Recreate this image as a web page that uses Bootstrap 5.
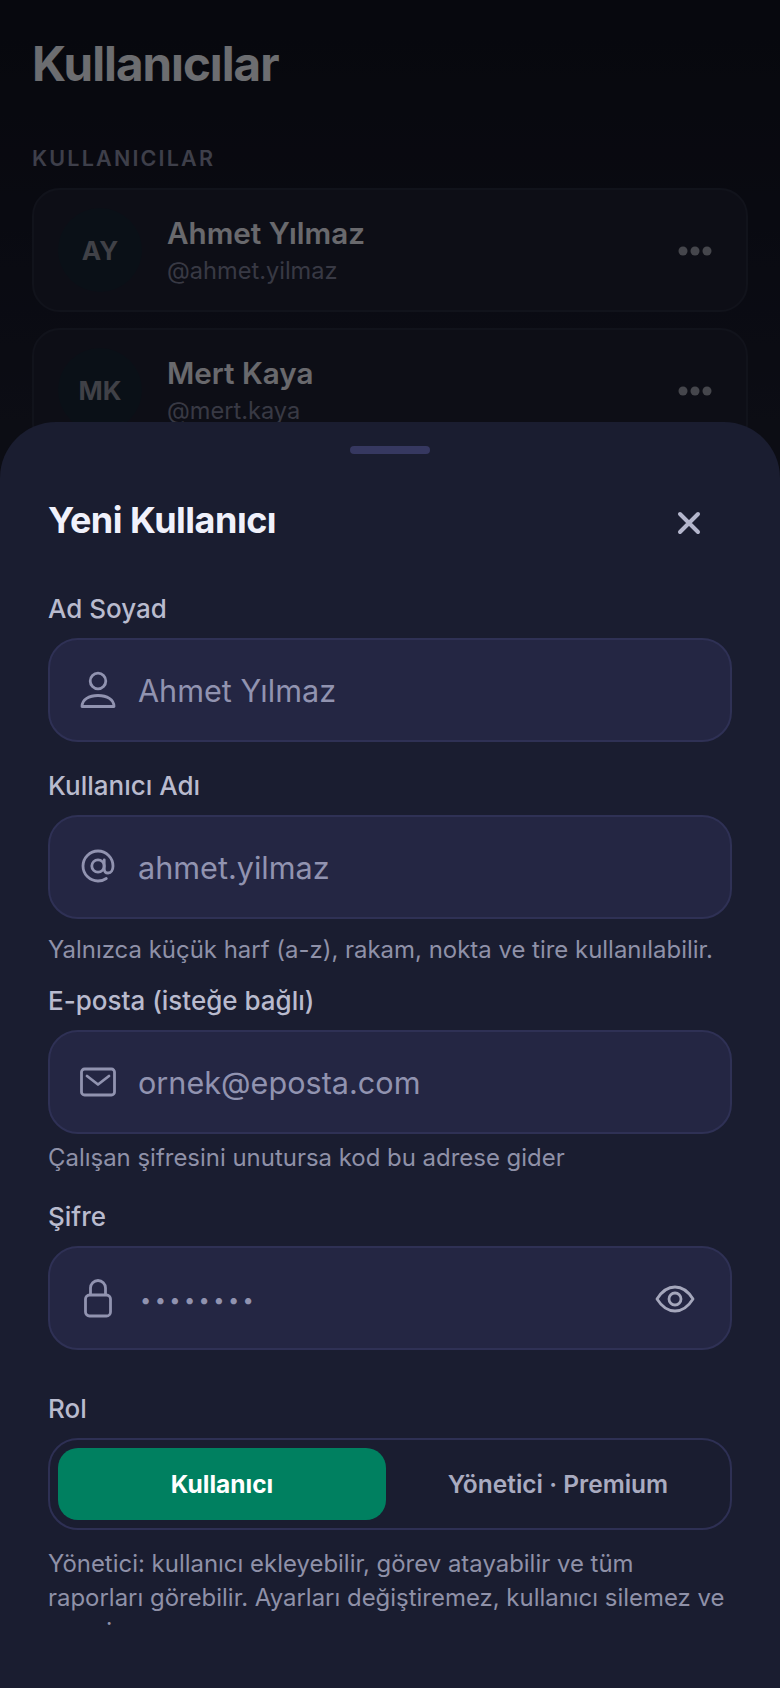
<!DOCTYPE html>
<html lang="tr">
<head>
<meta charset="utf-8">
<title>Kullanıcılar</title>
<link href="https://cdn.jsdelivr.net/npm/bootstrap@5.3.0/dist/css/bootstrap.min.css" rel="stylesheet">
<style>
html,body{height:100%;margin:0}
body{background:linear-gradient(#10121f 0,#1b1d2e 422px);font-family:"Inter","Liberation Sans",sans-serif;overflow:hidden;position:relative;width:780px;height:1688px}
.pg-wrap{padding:37px 32px 0}
.pg-title{font-size:47.500px;font-weight:700;letter-spacing:-1px;line-height:54px;color:#f0f1f8;margin:0 0 55px}
.pg-section{font-size:21.500px;font-weight:600;letter-spacing:2.200px;line-height:24px;color:#8a8ca4;margin:0 0 18px}
.u-card{flex-direction:row;align-items:center;height:124px;margin-bottom:16px;padding:0 24px;background:#1e2031;border:2px solid #272a3d;border-radius:28px}
.u-av{width:84px;height:84px;border-radius:50%;background:#182434;color:#8e909e;font-size:26px;font-weight:700;flex:none}
.u-text{margin-left:25px}
.u-name{font-size:29.600px;font-weight:600;line-height:36px;color:#e8e9f2}
.u-handle{font-size:23.600px;line-height:30px;color:#7d7f97;margin-top:5px}
.u-dots{width:34px;height:10px;flex:none;margin:2px 10px 0 0}
.dimmer{position:absolute;inset:0;background:rgba(0,0,0,.55)}
.sheet{position:absolute;left:0;right:0;top:422px;bottom:0;background:#1a1d30;border-radius:56px 56px 0 0;padding:24px 48px 0}
.sheet-clip{height:1032px;overflow:hidden}
.grab{width:80px;height:8px;border-radius:4px;background:#363860;margin:0 auto}
.sheet-head{height:40px;margin:46px 0 54px}
.sheet-title{font-size:36px;font-weight:700;letter-spacing:-.5px;color:#f0f1fb;margin:0;line-height:40px}
.x-btn{width:64px;height:64px;margin:6px 11px 0 0;border:0;background:none;padding:0}
.fld-label{font-size:26px;font-weight:500;line-height:30px;color:#b9bbce;margin:0 0 14px;display:block}
.fld{height:104px;background:#242643;border:2px solid #2f3155;border-radius:30px;padding:0 32px 0 30px;gap:22px}
.fld .form-control{background:transparent;border:0;box-shadow:none;padding:0;font-size:30.600px;color:#9193b0;height:60px;border-radius:0;font-family:inherit}
.fld .form-control::placeholder{color:#9193b0;opacity:1}
.fld svg{flex:none}
.fld-ico{width:36px;height:40px;flex:none}
.fld .eye{margin:2px 3px 0 0}
.hint{font-size:23.950px;line-height:34px;color:#8f91a8}
.g29{margin-top:29px}.g19{margin-top:19px}.g27{margin-top:27px}.g44{margin-top:44px}
.h14{margin-top:14px}.h7{margin-top:7px}.h17{margin-top:17px}
.seg{height:92px;padding:8px;border:2px solid #2e3054;border-radius:30px}
.seg .btn{flex:1 1 50%;height:72px;border:0;border-radius:20px;font-size:24.500px;font-weight:600;color:#a9abc0;padding:0}
.seg .btn.on{background:#008060;color:#fff;font-weight:700}
.fld .pw{font-size:20px;letter-spacing:3.400px;padding:4px 0 0 2px}
</style>
</head>
<body>
<main class="pg-wrap">
  <h1 class="pg-title">Kullanıcılar</h1>
  <div class="pg-section">KULLANICILAR</div>
  <div class="card u-card d-flex">
    <div class="u-av d-flex align-items-center justify-content-center">AY</div>
    <div class="flex-grow-1 u-text">
      <div class="u-name">Ahmet Yılmaz</div>
      <div class="u-handle">@ahmet.yilmaz</div>
    </div>
    <svg class="u-dots" viewBox="0 0 34 10" fill="#9a9ba8"><circle cx="5" cy="5" r="4.500"/><circle cx="17" cy="5" r="4.500"/><circle cx="29" cy="5" r="4.500"/></svg>
  </div>
  <div class="card u-card d-flex">
    <div class="u-av d-flex align-items-center justify-content-center">MK</div>
    <div class="flex-grow-1 u-text">
      <div class="u-name">Mert Kaya</div>
      <div class="u-handle">@mert.kaya</div>
    </div>
    <svg class="u-dots" viewBox="0 0 34 10" fill="#9a9ba8"><circle cx="5" cy="5" r="4.500"/><circle cx="17" cy="5" r="4.500"/><circle cx="29" cy="5" r="4.500"/></svg>
  </div>
</main>
<div class="dimmer"></div>
<section class="sheet">
  <div class="grab"></div>
  <div class="sheet-head d-flex align-items-center justify-content-between">
    <h2 class="sheet-title">Yeni Kullanıcı</h2>
    <button class="x-btn d-flex align-items-center justify-content-center" type="button" aria-label="Kapat">
      <svg width="26" height="26" viewBox="0 0 26 26" fill="none" stroke="#b4b6cc" stroke-width="4" stroke-linecap="round"><path d="M4 4l18 18M22 4L4 22"/></svg>
    </button>
  </div>
  <div class="sheet-clip">
    <label class="fld-label">Ad Soyad</label>
    <div class="fld d-flex align-items-center">
      <svg class="fld-ico" viewBox="0 0 36 40" fill="none" stroke="#9193b0" stroke-width="2.800" stroke-linejoin="round"><circle cx="18" cy="11" r="7.800"/><path d="M2 36.500c0-7 7-11 16-11s16 4 16 11z"/></svg>
      <input class="form-control" type="text" placeholder="Ahmet Yılmaz">
    </div>
    <label class="fld-label g29">Kullanıcı Adı</label>
    <div class="fld d-flex align-items-center">
      <svg class="fld-ico" viewBox="0 0 36 40" fill="none" stroke="#9193b0" stroke-width="2.800" stroke-linecap="round"><circle cx="18" cy="19" r="6.200"/><path d="M24.200 12.800v8.600c0 3 1.800 4.600 3.900 4.600 3 0 4.900-3 4.900-7 0-8.300-6.700-15-15-15S3 10.700 3 19s6.700 15 15 15c3.200 0 6-.9 8.300-2.500"/></svg>
      <input class="form-control" type="text" placeholder="ahmet.yilmaz">
    </div>
    <div class="hint h14">Yalnızca küçük harf (a-z), rakam, nokta ve tire kullanılabilir.</div>
    <label class="fld-label g19">E-posta (isteğe bağlı)</label>
    <div class="fld d-flex align-items-center">
      <svg class="fld-ico" viewBox="0 0 36 40" fill="none" stroke="#9193b0" stroke-width="2.800" stroke-linecap="round" stroke-linejoin="round"><rect x="1.500" y="7" width="33" height="26" rx="3"/><path d="M7 14l11 8.500L29 14"/></svg>
      <input class="form-control" type="email" placeholder="ornek@eposta.com">
    </div>
    <div class="hint h7">Çalışan şifresini unutursa kod bu adrese gider</div>
    <label class="fld-label g27">Şifre</label>
    <div class="fld d-flex align-items-center">
      <svg class="fld-ico" viewBox="0 0 36 40" fill="none" stroke="#9193b0" stroke-width="2.800" stroke-linejoin="round"><rect x="5.500" y="17" width="25" height="21" rx="4"/><path d="M10.500 17v-7a7.500 7.500 0 0 1 15 0v7"/></svg>
      <input class="form-control pw" type="password" value="12345678">
      <svg class="eye" width="40" height="28" viewBox="0 0 40 28" fill="none" stroke="#a5a7bc" stroke-width="2.800"><path d="M2 14C7 6 13 2 20 2s13 4 18 12c-5 8-11 12-18 12S7 22 2 14z" stroke-linejoin="round"/><circle cx="20" cy="14" r="6"/></svg>
    </div>
    <label class="fld-label g44">Rol</label>
    <div class="seg d-flex gap-2" role="group">
      <button class="btn on" type="button">Kullanıcı</button>
      <button class="btn" type="button">Yönetici · Premium</button>
    </div>
    <div class="hint h17">Yönetici: kullanıcı ekleyebilir, görev atayabilir ve tüm raporları görebilir. Ayarları değiştiremez, kullanıcı silemez ve premium</div>
  </div>
</section>
</body>
</html>
